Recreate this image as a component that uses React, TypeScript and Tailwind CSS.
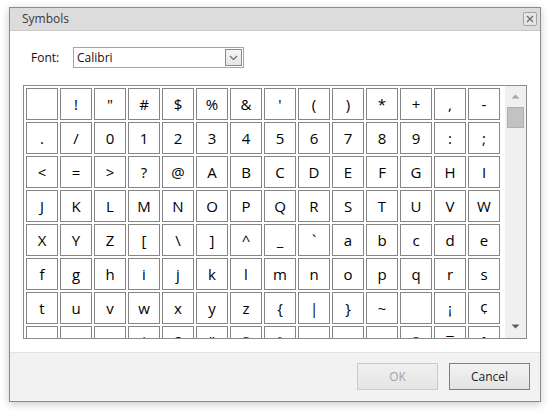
const ui = { fontFamily: '"Open Sans", "Noto Sans", sans-serif' };
const sym = { fontFamily: '"Open Sans", "Noto Sans", sans-serif' };

function buildChars() {
  const out: string[] = [];
  for (let c = 0x20; c <= 0x7e; c++) out.push(String.fromCharCode(c));
  for (let c = 0xa0; c <= 0xb0; c++) out.push(String.fromCharCode(c));
  return out;
}

const chars = buildChars();

function CloseButton() {
  return (
    <button className="w-[14px] h-[14px] rounded-[2px] border border-[#a3a3a3] bg-[#e6e6e6] flex items-center justify-center">
      <svg width="8" height="8" viewBox="0 0 8 8">
        <path d="M1 1 L7 7 M7 1 L1 7" stroke="#6e6e6e" strokeWidth="1.4" />
      </svg>
    </button>
  );
}

function FontSelect() {
  return (
    <div className="w-[171px] h-[21px] border border-[#a5a5a5] bg-white flex items-center justify-between pl-[3px] pr-[1px]">
      <span className="text-[12px] text-[#111]" style={ui}>Calibri</span>
      <div className="w-[17px] h-[17px] border border-[#8a8a8a] bg-gradient-to-b from-[#f6f6f6] to-[#e6e6e6] flex items-center justify-center">
        <svg width="9" height="6" viewBox="0 0 9 6">
          <path d="M1 1 L4.5 4.5 L8 1" stroke="#6b6b6b" strokeWidth="1.2" fill="none" />
        </svg>
      </div>
    </div>
  );
}

function Scrollbar() {
  return (
    <div className="w-[21px] bg-[#f0f0f0] flex flex-col items-center">
      <div className="h-[19px] w-full flex items-center justify-center pt-[2px]">
        <svg width="9" height="5" viewBox="0 0 9 5">
          <path d="M0.5 4.5 L4.5 0.5 L8.5 4.5 Z" fill="#a8a8a8" />
        </svg>
      </div>
      <div className="mt-[2px] w-[17px] h-[21px] bg-[#c2c2c2] border border-[#b0b0b0]" />
      <div className="flex-1" />
      <div className="h-[20px] w-full flex items-center justify-center pb-[4px]">
        <svg width="9" height="5" viewBox="0 0 9 5">
          <path d="M0.5 0.5 L8.5 0.5 L4.5 4.5 Z" fill="#5c5c5c" />
        </svg>
      </div>
    </div>
  );
}

export default function App() {
  return (
    <div className="w-[556px] h-[415px] bg-white pt-[7px] pl-[9px]" style={ui}>
      <div className="w-[532px] h-[395px] border border-[#8c8c8c] bg-white flex flex-col shadow-[0_2px_8px_rgba(0,0,0,0.22)]">
        {/* title bar */}
        <div className="h-[23px] bg-[#dcdcdc] border-b border-[#c8c8c8] flex items-center justify-between pl-[12px] pr-[3px]">
          <span className="text-[12px] text-[#3a3a3a]">Symbols</span>
          <CloseButton />
        </div>

        {/* body */}
        <div className="flex-1 flex flex-col pt-[16px] pl-[13px]">
          <div className="flex items-center h-[21px]">
            <span className="w-[50px] pl-[8px] text-[12px] text-[#111]">Font:</span>
            <FontSelect />
          </div>

          <div className="mt-[17px] w-[504px] h-[254px] border border-[#8c8c8c] flex">
            <div className="w-[481px] overflow-hidden pt-[2px] pl-[2px]">
              <div className="grid grid-cols-[repeat(14,32px)] gap-[2px]">
                {chars.map((ch, i) => (
                  <div
                    key={i}
                    className="w-[32px] h-[32px] border border-[#858585] bg-white flex items-center justify-center text-[15px] text-black leading-none"
                    style={sym}
                  >
                    {ch}
                  </div>
                ))}
              </div>
            </div>
            <div className="w-[4px]" />
            <Scrollbar />
          </div>
        </div>

        {/* footer */}
        <div className="h-[49px] border-t border-[#e2e2e2] bg-[#f2f2f2] flex justify-end gap-[11px] pt-[10px] pr-[10px]">
          <button className="w-[81px] h-[27px] border border-[#cacaca] bg-gradient-to-b from-[#f0f0f0] to-[#e5e5e5] text-[12px] text-[#a3a3a3]">
            OK
          </button>
          <button className="w-[81px] h-[27px] border border-[#7f7f7f] bg-gradient-to-b from-[#f3f3f3] to-[#e3e3e3] text-[12px] text-[#222]">
            Cancel
          </button>
        </div>
      </div>
    </div>
  );
}
